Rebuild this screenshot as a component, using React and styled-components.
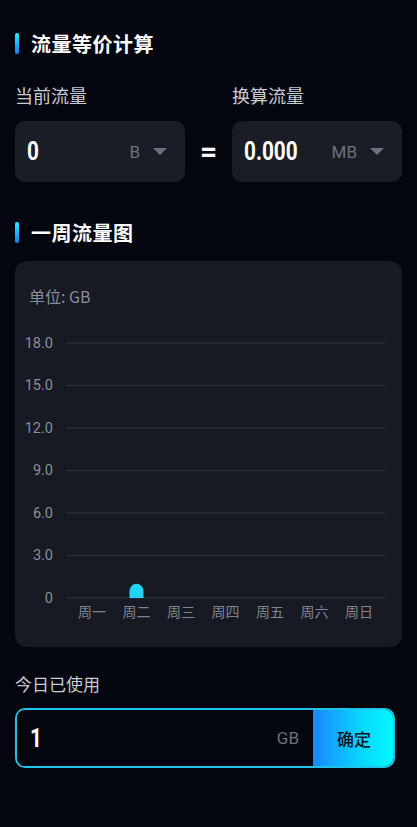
import React from "react";
import styled, { createGlobalStyle } from "styled-components";

const GlobalStyle = createGlobalStyle`
  html, body {
    margin: 0;
    padding: 0;
    background: #04060f;
  }
  body {
    font-family: Roboto, "Noto Sans CJK SC", sans-serif;
    color: #fff;
  }
`;

const days = ["周一", "周二", "周三", "周四", "周五", "周六", "周日"];
const usage = [0, 1, 0, 0, 0, 0, 0];
const ticks = [18, 15, 12, 9, 6, 3, 0];

const App = () => {
    const plotTop = 18;
    const plotBottom = 273;
    const maxVal = 18;
    const colStart = 54.75;
    const colWidth = 44.5;

    return (
        <Page>
            <GlobalStyle />
            <SectionTitle>流量等价计算</SectionTitle>
            <LabelRow>
                <FieldLabel size={18}>当前流量</FieldLabel>
                <span />
                <FieldLabel size={18}>换算流量</FieldLabel>
            </LabelRow>
            <BoxRow>
                <ValueBox>
                    <Number><span>0</span></Number>
                    <Unit>B</Unit>
                    <Caret />
                </ValueBox>
                <Equals>=</Equals>
                <ValueBox>
                    <Number><span>0.000</span></Number>
                    <Unit>MB</Unit>
                    <Caret />
                </ValueBox>
            </BoxRow>

            <SectionTitle top={40}>一周流量图</SectionTitle>
            <ChartCard>
                <UnitLabel>单位: GB</UnitLabel>
                <Plot width="387" height="300" viewBox="0 0 387 300">
                    {ticks.map((t) => {
                        const y = plotTop + (plotBottom - plotTop) * (1 - t / maxVal);
                        return (
                            <g key={t}>
                                <line x1="51" x2="370" y1={y} y2={y} stroke="#2a2e39" strokeWidth="1.3" />
                                <text x="38" y={y} textAnchor="end" dominantBaseline="central" fill="#8a8f9b" fontSize="14.5">
                                    {t === 0 ? "0" : t.toFixed(1)}
                                </text>
                            </g>
                        );
                    })}
                    {days.map((d, i) => {
                        const cx = colStart + colWidth * i + colWidth / 2;
                        const h = (usage[i] / maxVal) * (plotBottom - plotTop);
                        return (
                            <g key={d}>
                                {h > 0 && (
                                    <path
                                        d={`M${cx - 7} ${plotBottom} V${plotBottom - h + 7} A7 7 0 0 1 ${cx + 7} ${plotBottom - h + 7} V${plotBottom} Z`}
                                        fill="#22d3f5"
                                    />
                                )}
                                <text x={cx} y="287" textAnchor="middle" dominantBaseline="central" fill="#7f8490" fontSize="14">
                                    {d}
                                </text>
                            </g>
                        );
                    })}
                </Plot>
            </ChartCard>

            <FieldLabel top={26}>今日已使用</FieldLabel>
            <UsageForm>
                <UsageInput>
                    <Number><span>1</span></Number>
                    <Unit>GB</Unit>
                </UsageInput>
                <ConfirmButton>确定</ConfirmButton>
            </UsageForm>
        </Page>
    );
}

export default App;

const Page = styled.div`
    width: 417px;
    min-height: 827px;
    box-sizing: border-box;
    padding: 33px 15px 0 15px;
    background: #04060f;
`;

const SectionTitle = styled.div`
    position: relative;
    margin-top: ${(p) => p.top || 0}px;
    height: 22px;
    line-height: 22px;
    padding-left: 16px;
    font-family: "Noto Sans CJK SC", sans-serif;
    font-size: 20px;
    font-weight: 600;
    letter-spacing: 0.5px;
    color: #fff;
    &::before {
        content: "";
        position: absolute;
        left: 0;
        top: 0;
        width: 4px;
        height: 21px;
        border-radius: 2px;
        background: linear-gradient(180deg, #1ff2ff 0%, #1a7dff 100%);
    }
`;

const LabelRow = styled.div`
    display: grid;
    grid-template-columns: 170px 1fr 170px;
    margin-top: 29px;
`;

const FieldLabel = styled.div`
    margin-top: ${(p) => p.top || 0}px;
    height: 22px;
    line-height: 22px;
    font-family: "Noto Sans CJK SC", sans-serif;
    font-size: ${(p) => p.size || 17}px;
    color: #c9ccd3;
`;

const BoxRow = styled.div`
    display: grid;
    grid-template-columns: 170px 1fr 170px;
    align-items: center;
    margin-top: 15px;
`;

const ValueBox = styled.div`
    height: 61px;
    display: flex;
    align-items: center;
    padding: 0 18px 0 12px;
    background: #1a1d26;
    border-radius: 10px;
`;

const Number = styled.div`
    flex: 1;
    font-family: Roboto, sans-serif;
    font-size: 25px;
    font-weight: 700;
    color: #fff;
    & > span {
        display: inline-block;
        transform: scaleX(0.83);
        transform-origin: left center;
    }
`;

const Unit = styled.div`
    font-family: Roboto, sans-serif;
    font-size: 17px;
    color: #6c717e;
`;

const Caret = styled.div`
    width: 0;
    height: 0;
    margin-left: 13px;
    border-left: 7px solid transparent;
    border-right: 7px solid transparent;
    border-top: 7px solid #6c717e;
`;

const Equals = styled.div`
    text-align: center;
    font-family: Roboto, sans-serif;
    font-size: 30px;
    font-weight: 700;
    color: #fff;
`;

const ChartCard = styled.div`
    margin-top: 17px;
    height: 386px;
    box-sizing: border-box;
    padding: 25px 0 0 0;
    background: #171a23;
    border-radius: 12px;
`;

const UnitLabel = styled.div`
    padding-left: 14px;
    height: 20px;
    line-height: 20px;
    font-family: "Noto Sans CJK SC", sans-serif;
    font-size: 16px;
    color: #8a8f9b;
`;

const Plot = styled.svg`
    display: block;
    margin-top: 19px;
    font-family: Roboto, "Noto Sans CJK SC", sans-serif;
`;

const UsageForm = styled.div`
    display: flex;
    width: 380px;
    height: 60px;
    margin-top: 13px;
    box-sizing: border-box;
    border: 2px solid #1fc3ea;
    border-radius: 10px;
    overflow: hidden;
`;

const UsageInput = styled.div`
    flex: 1;
    display: flex;
    align-items: center;
    padding: 0 14px 0 13px;
    background: #04060f;
`;

const ConfirmButton = styled.div`
    width: 82px;
    margin: -2px -2px -2px 0;
    display: flex;
    align-items: center;
    justify-content: center;
    background: linear-gradient(90deg, #1a86ff 0%, #07d8fb 60%, #00fbff 100%);
    font-family: "Noto Sans CJK SC", sans-serif;
    font-size: 17px;
    font-weight: 500;
    color: #0b1626;
`;
